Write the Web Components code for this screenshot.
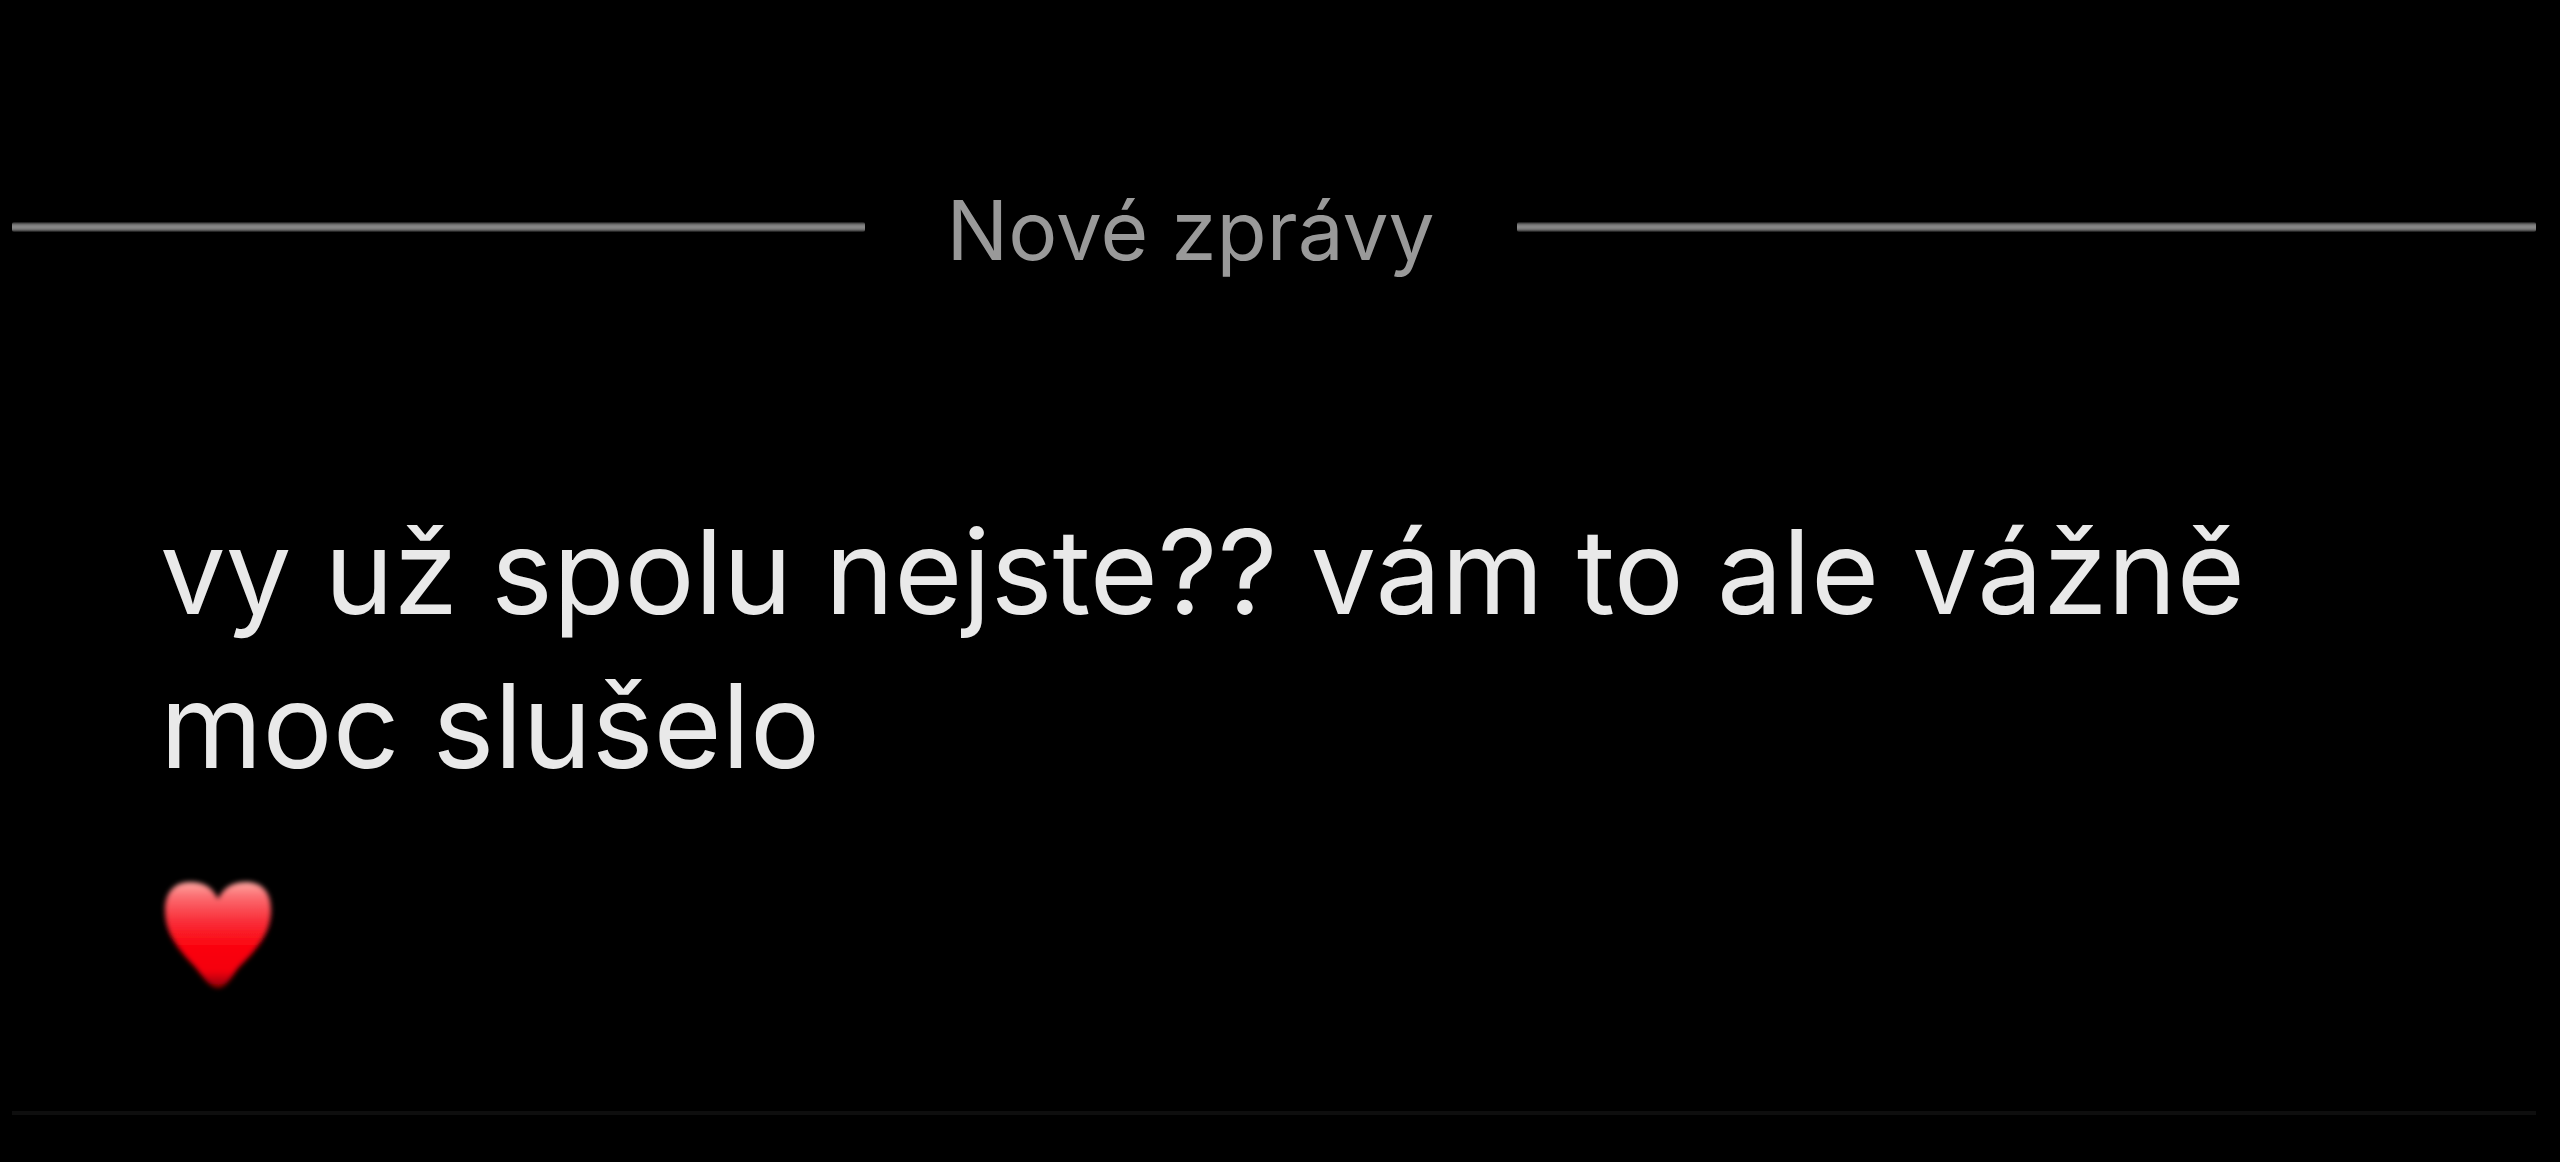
<!DOCTYPE html>
<html lang="cs">
<head>
<meta charset="utf-8">
<meta name="viewport" content="width=device-width, initial-scale=1">
<title>Nové zprávy</title>
<style>
html { background: #000; }
body { margin: 0; font-family: Inter, "Noto Sans", sans-serif; }
</style>
</head>
<body>
<chat-view></chat-view>

<script>
class NewDivider extends HTMLElement {
  constructor() {
    super();
    this.attachShadow({ mode: 'open' }).innerHTML = `
      <style>
        :host { display: flex; align-items: center; gap: 82px; color: #999; font-size: 82px; line-height: 100px; white-space: nowrap; }
        i { height: 10px; background: linear-gradient(#111, #666 20%, #868686 40%, #868686 60%, #666 80%, #111); border-radius: 2px; }
        .before { flex: 854; }
        .after { flex: 1021; }
        span { padding-top: 8px; }
      </style>
      <i class="before"></i><span><slot></slot></span><i class="after"></i>`;
  }
}
customElements.define('new-divider', NewDivider);

class HeartEmoji extends HTMLElement {
  constructor() {
    super();
    this.attachShadow({ mode: 'open' }).innerHTML = `
      <style>
        :host { display: block; width: 114px; height: 114px; }
        svg { display: block; width: 100%; height: 100%; overflow: visible; }
      </style>
      <svg viewBox="-1 0 114 114" role="img" aria-label="srdce">
        <defs>
          <linearGradient id="g" x1="0" y1="0" x2="0" y2="1">
            <stop offset="0" stop-color="#ffa8a2"/>
            <stop offset=".14" stop-color="#fb6c70"/>
            <stop offset=".36" stop-color="#f9303b"/>
            <stop offset=".6" stop-color="#fb0510"/>
            <stop offset=".84" stop-color="#f5000c"/>
            <stop offset="1" stop-color="#8a0005"/>
          </linearGradient>
          <filter id="s" x="-10%" y="-10%" width="120%" height="120%"><feGaussianBlur stdDeviation="2.4"/></filter>
        </defs>
        <path filter="url(#s)" fill="url(#g)" d="M57 20C63 8 72 3 85 3C102 3 110 14 110 31C110 54 97 69 79 87C71 96 67 108 57 109C47 108 42 97 34 88C16 69 4 54 4 31C4 14 13 3 29 3C43 3 51 8 57 20Z"/>
      </svg>`;
  }
}
customElements.define('heart-emoji', HeartEmoji);

class ChatMessage extends HTMLElement {
  constructor() {
    super();
    this.attachShadow({ mode: 'open' }).innerHTML = `
      <style>
        :host { display: flex; flex-direction: column; gap: 76px; color: #e9e9e9; font-size: 117px; line-height: 154px; }
        p { margin: 0; }
      </style>
      <p><slot></slot></p>
      <slot name="reaction"></slot>`;
  }
}
customElements.define('chat-message', ChatMessage);

class ChatView extends HTMLElement {
  constructor() {
    super();
    this.attachShadow({ mode: 'open' }).innerHTML = `
      <style>
        :host { display: flex; flex-direction: column; box-sizing: border-box; padding: 173px 24px 44px 12px; }
        chat-message { padding: 214px 148px 0; }
        hr { width: 100%; box-sizing: border-box; height: 4px; margin: 118px 0 0; border: 0; background: #0e0e0e; }
      </style>
      <new-divider>Nové zprávy</new-divider>
      <chat-message>vy už spolu nejste?? vám to ale vážně moc slušelo<heart-emoji slot="reaction"></heart-emoji></chat-message>
      <hr>`;
  }
}
customElements.define('chat-view', ChatView);
</script>
</body>
</html>
